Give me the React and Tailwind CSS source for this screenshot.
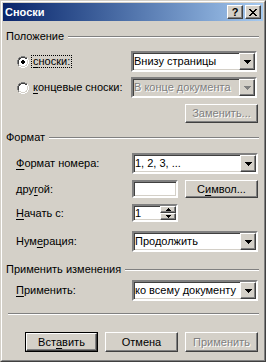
import React from 'react';

const raised =
  'border border-t-white border-l-white border-r-[#404040] border-b-[#404040] shadow-[inset_-1px_-1px_0_#808080,inset_1px_1px_0_#D4D0C8]';
const sunken =
  'border-2 border-t-[#808080] border-l-[#808080] border-r-white border-b-white shadow-[inset_1px_1px_0_#404040,inset_-1px_-1px_0_#D4D0C8]';
const disabledText = 'text-[#808080] [text-shadow:1px_1px_0_#ffffff]';

const Arrow = ({ disabled }) => (
  <svg width="7" height="4" viewBox="0 0 7 4">
    <path d="M0 0h7v1H0zM1 1h5v1H1zM2 2h3v1H2zM3 3h1v1H3z" fill={disabled ? '#808080' : '#000'} />
  </svg>
);

const Combo = ({ value, disabled }) => (
  <div className={`w-[126px] h-[21px] flex ${sunken} ${disabled ? 'bg-[#D4D0C8]' : 'bg-white'}`}>
    <div className={`flex-1 flex items-center pl-[1px] whitespace-nowrap overflow-hidden ${disabled ? disabledText : 'text-black'}`}>
      {value}
    </div>
    <div className={`w-[16px] bg-[#D4D0C8] flex items-center justify-center ${raised}`}>
      <Arrow disabled={disabled} />
    </div>
  </div>
);

const Button = ({ children, disabled, wide, isDefault }) => {
  const inner = (
    <div className={`h-full flex items-center justify-center bg-[#D4D0C8] ${raised} ${disabled ? disabledText : 'text-black'}`}>
      {children}
    </div>
  );
  return (
    <div className={`${wide ? 'w-[74px]' : 'w-[73px]'} h-full ${isDefault ? 'border border-black' : ''}`}>{inner}</div>
  );
};

const Radio = ({ checked }) => (
  <svg width="12" height="12" viewBox="0 0 12 12">
    <path d="M4 0h4v1h2v1h1v2h1v4h-1v2h-1v1h-2v1H4v-1H2v-1H1V8H0V4h1V2h1V1h2z" fill="#ffffff" />
    <path d="M4 0h4v1H4zM2 1h2v1H2zM8 1h2v1H8zM1 2h1v2H1zM0 4h1v4H0zM1 8h1v2H1z" fill="#808080" />
    <path d="M4 1h4v1H4zM2 2h2v1H2zM8 2h2v1H8zM1 4h1v4H1zM2 3h1v1H2z" fill="#404040" />
    <path d="M10 2h1v2h-1zM11 4h1v4h-1zM10 8h1v2h-1zM8 10h2v1H8zM2 10h2v1H2zM4 11h4v1H4z" fill="#ffffff" />
    <path d="M10 4h1v4h-1zM9 8h1v2H9zM2 9h2v1H2zM4 10h4v1H4zM8 9h1v1H8z" fill="#D4D0C8" />
    {checked && <path d="M5 4h2v1h1v2H7v1H5V7H4V5h1z" fill="#000" />}
  </svg>
);

const Header = ({ children }) => (
  <div className="h-[13px] flex items-center">
    <span className="pr-[4px] whitespace-nowrap">{children}</span>
    <div className="flex-1 border-t border-t-[#808080] border-b border-b-white" />
  </div>
);

const U = ({ children }) => <span className="underline underline-offset-[2px]">{children}</span>;

export default function App() {
  return (
    <div
      className="w-[266px] h-[362px] bg-[#D4D0C8] border border-t-[#D4D0C8] border-l-[#D4D0C8] border-r-[#404040] border-b-[#404040] text-[11px] text-black overflow-hidden"
      style={{ fontFamily: '"Liberation Sans", Arial, sans-serif' }}
    >
      <div className="h-full border border-t-white border-l-white border-r-[#808080] border-b-[#808080] p-[1px] flex flex-col">
        <div className="h-[18px] flex items-center bg-gradient-to-r from-[#0A246A] to-[#A6CAF0] pl-[2px] pr-[2px] gap-[2px]">
          <span className="flex-1 text-white font-bold text-[11px]">Сноски</span>
          <div className={`w-[16px] h-[14px] bg-[#D4D0C8] flex items-center justify-center font-bold text-[11px] leading-none ${raised}`}>?</div>
          <div className={`w-[16px] h-[14px] bg-[#D4D0C8] flex items-center justify-center ${raised}`}>
            <svg width="8" height="7" viewBox="0 0 8 7">
              <path d="M0 0h2v1h1v1h2V1h1V0h2v1H7v1H6v1H5v1h1v1h1v1h1v1H6V6H5V5H3v1H2v1H0V6h1V5h1V4h1V3H2V2H1V1H0z" fill="#000" />
            </svg>
          </div>
        </div>

        <div className="flex flex-col pl-[3px] pr-[4px]">
          <div className="mt-[9px]">
            <Header>Положение</Header>
          </div>
          <div className="mt-[8px] h-[21px] flex items-center">
            <div className="w-[125px] flex items-center pl-[11px]">
              <Radio checked />
              <span className="ml-[2px] px-[1px] leading-[11px] py-[0px] border border-dotted border-black">
                <U>с</U>носки:
              </span>
            </div>
            <Combo value="Внизу страницы" />
          </div>
          <div className="mt-[5px] h-[21px] flex items-center">
            <div className="w-[125px] flex items-center pl-[11px]">
              <Radio />
              <span className="ml-[4px] whitespace-nowrap">
                <U>к</U>онцевые сноски:
              </span>
            </div>
            <Combo value="В конце документа" disabled />
          </div>
          <div className="mt-[6px] h-[19px] flex justify-end pr-[1px]">
            <Button disabled>Заменить...</Button>
          </div>

          <div className="mt-[8px]">
            <Header>Формат</Header>
          </div>
          <div className="mt-[9px] h-[21px] flex items-center">
            <span className="w-[126px] pl-[10px]">
              <U>Ф</U>ормат номера:
            </span>
            <Combo value="1, 2, 3, ..." />
          </div>
          <div className="mt-[6px] h-[18px] flex items-center">
            <span className="w-[126px] pl-[10px]">
              дру<U>г</U>ой:
            </span>
            <div className={`w-[46px] h-[18px] bg-white ${sunken}`} />
            <div className="ml-[7px] h-full">
              <Button>
                С<U>и</U>мвол...
              </Button>
            </div>
          </div>
          <div className="mt-[6px] h-[18px] flex items-center">
            <span className="w-[126px] pl-[10px]">
              <U>Н</U>ачать с:
            </span>
            <div className={`w-[46px] h-[18px] bg-white flex ${sunken}`}>
              <div className="flex-1 flex items-center pl-[1px]">1</div>
              <div className="w-[16px] flex flex-col">
                <div className={`flex-1 bg-[#D4D0C8] flex items-center justify-center ${raised}`}>
                  <svg width="5" height="3" viewBox="0 0 5 3">
                    <path d="M2 0h1v1h1v1h1v1H0V2h1V1h1z" fill="#000" />
                  </svg>
                </div>
                <div className={`flex-1 bg-[#D4D0C8] flex items-center justify-center ${raised}`}>
                  <svg width="5" height="3" viewBox="0 0 5 3">
                    <path d="M0 0h5v1H4v1H3v1H2V2H1V1H0z" fill="#000" />
                  </svg>
                </div>
              </div>
            </div>
          </div>
          <div className="mt-[9px] h-[21px] flex items-center">
            <span className="w-[126px] pl-[10px]">
              Нум<U>е</U>рация:
            </span>
            <Combo value="Продолжить" />
          </div>

          <div className="mt-[11px]">
            <Header>Применить изменения</Header>
          </div>
          <div className="mt-[4px] h-[21px] flex items-center">
            <span className="w-[126px] pl-[10px]">
              <U>П</U>рименить:
            </span>
            <Combo value="ко всему документу" />
          </div>

          <div className="mt-[12px] ml-[2px] border-t border-t-[#808080] border-b border-b-white" />

          <div className="mt-[17px] h-[20px] flex justify-end gap-[7px] pr-[1px]">
            <Button isDefault>
              Вст<U>а</U>вить
            </Button>
            <Button>Отмена</Button>
            <Button disabled>Применить</Button>
          </div>
        </div>
      </div>
    </div>
  );
}
